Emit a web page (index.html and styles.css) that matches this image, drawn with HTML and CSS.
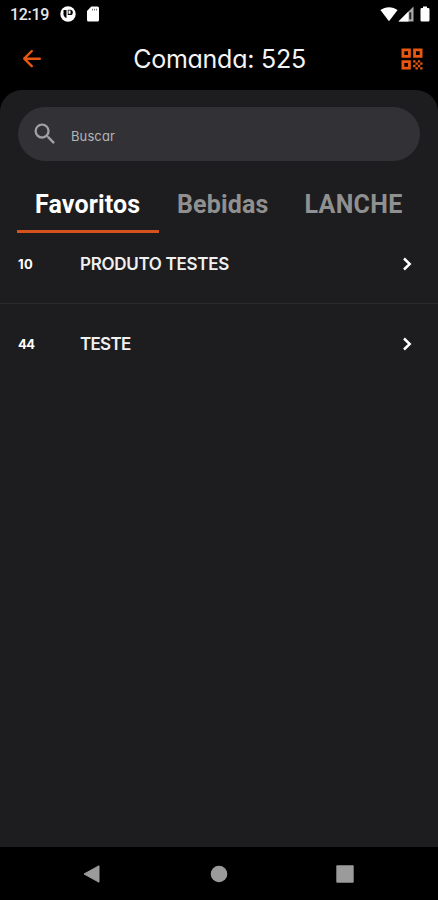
FILE: index.html
```html
<!DOCTYPE html>
<html lang="pt-BR">
<head>
<meta charset="utf-8">
<meta name="viewport" content="width=device-width, initial-scale=1">
<title>Comanda: 525</title>
<link rel="stylesheet" href="styles.css">
</head>
<body>
<div class="phone">
  <div class="status">
    <span class="clock">12:19</span>
    <svg class="app-dot" width="16" height="16" viewBox="0 0 16 16"><circle cx="8" cy="8" r="7.700" fill="#fff"/><path d="M3.500 4h3v8.200A4.800 4.800 0 0 1 3.500 9zM7.800 3.800h2.400a2.600 2.600 0 0 1 0 5.200H7.800z" fill="#000"/><path d="M8.500 4.500h2v3.300h-2z" fill="#fff"/></svg>
    <svg class="sd" width="12" height="16" viewBox="0 0 12 16"><path d="M4.300.500h6.200A1.500 1.500 0 0 1 12 2v12a1.500 1.500 0 0 1-1.500 1.500h-9A1.500 1.500 0 0 1 0 14V5z" fill="#fff"/><path d="M5 2.800h1v1.700H5zM7 2.800h1v1.700H7zM9 2.800h1v1.700H9z" fill="#777"/></svg>
    <svg class="wifi" width="18" height="16" viewBox="0 0 18 16"><path d="M9 15.200.400 4.100C5.200.200 12.800.200 17.600 4.100z" fill="#fff"/></svg>
    <svg class="signal" width="16" height="16" viewBox="0 0 16 16"><path d="M15.500.500v15H.500z" fill="#aaa"/><path d="M10.500 5.500v10H.500z" fill="#fff"/><path d="M11.300 6.300h2v7h-2z" fill="#222"/></svg>
    <svg class="battery" width="10" height="16" viewBox="0 0 10 16"><path d="M3 .500h4V2h1.200A1.300 1.300 0 0 1 9.500 3.300v10.900a1.300 1.300 0 0 1-1.300 1.300H1.800A1.300 1.300 0 0 1 .500 14.200V3.300A1.300 1.300 0 0 1 1.800 2H3z" fill="#fff"/></svg>
  </div>
  <header class="header">
    <svg width="20" height="20" viewBox="0 0 20 20" fill="none" stroke="#e8560f" stroke-width="2.400" stroke-linecap="round" stroke-linejoin="round"><path d="M17.800 9.700H2.500M9.800 2 2.200 9.700l7.600 7.500"/></svg>
    <h1 class="title">Comanda: 525</h1>
    <svg class="qr" width="28" height="28" viewBox="0 0 24 24" fill="#e8560f"><path fill-rule="evenodd" d="M3 3h8v8H3zm2.400 2.400v3.200h3.200V5.400zM13 3h8v8h-8zm2.400 2.400v3.200h3.200V5.400zM3 13h8v8H3zm2.400 2.400v3.200h3.200v-3.200z"/><path d="M13 13h2v2h-2zM15 15h2v2h-2zM17 13h2v2h-2zM19 15h2v2h-2zM13 17h2v2h-2zM15 19h2v2h-2zM17 17h2v2h-2zM19 19h2v2h-2z"/></svg>
  </header>
  <main class="panel">
    <div class="search">
      <svg width="28" height="28" viewBox="0 0 24 24" fill="#a1a1a3"><path d="M15.500 14h-.790l-.280-.270A6.471 6.471 0 0 0 16 9.500 6.500 6.500 0 1 0 9.500 16c1.610 0 3.090-.590 4.230-1.570l.270.280v.790l5 4.990L20.490 19l-4.990-5zm-6 0C7.010 14 5 11.990 5 9.500S7.010 5 9.500 5 14 7.010 14 9.500 11.990 14 9.500 14z"/></svg>
      <span class="placeholder">Buscar</span>
    </div>
    <nav class="tabs">
      <div class="tab active"><span>Favoritos</span></div>
      <div class="tab"><span>Bebidas</span></div>
      <div class="tab last"><span>LANCHE</span></div>
    </nav>
    <div class="list">
      <div class="row"><span class="code">10</span><span class="name">PRODUTO TESTES</span><svg width="12" height="16" viewBox="0 0 12 16"><path d="M3 2.500 8.700 8 3 13.500" fill="none" stroke="#fff" stroke-width="2.500"/></svg></div>
      <div class="row"><span class="code tight">44</span><span class="name short">TESTE</span><svg width="12" height="16" viewBox="0 0 12 16"><path d="M3 2.500 8.700 8 3 13.500" fill="none" stroke="#fff" stroke-width="2.500"/></svg></div>
    </div>
  </main>
  <footer class="nav">
    <svg width="18" height="20" viewBox="0 0 18 20"><path d="M1 10 16 1.800v16.400z" fill="#9b9b9b" stroke="#9b9b9b" stroke-linejoin="round"/></svg>
    <svg width="18" height="18" viewBox="0 0 18 18"><circle cx="9" cy="9" r="8.300" fill="#9b9b9b"/></svg>
    <svg width="18" height="18" viewBox="0 0 18 18"><rect x=".300" y=".300" width="17.400" height="17.400" rx="1" fill="#9b9b9b"/></svg>
  </footer>
</div>
</body>
</html>
```
FILE: styles.css
```css
* { box-sizing: border-box; }
body { margin: 0; background: #000; }
svg { display: block; flex: none; }
.phone {
  width: 438px;
  height: 900px;
  display: flex;
  flex-direction: column;
  overflow: hidden;
  background: #000;
  color: #fff;
  font-family: Inter, sans-serif;
  font-feature-settings: "cv11";
}
.status { height: 28px; display: flex; align-items: center; padding: 0 8px 0 10px; }
.clock { font: 500 16px/28px Roboto, sans-serif; letter-spacing: -0.3px; width: 39px; padding-top: 1px; white-space: nowrap; color: #e8e8e8; }
.app-dot { margin-left: 11px; }
.sd { margin-left: 11px; }
.wifi { margin-left: auto; }
.battery { margin-left: 6px; }
.header {
  height: 62px;
  display: flex;
  align-items: center;
  justify-content: space-between;
  padding: 0 12px 0 22px;
}
.title { margin: 0 1px 0 0; font-size: 25px; font-weight: 400; line-height: 60px; letter-spacing: -0.25px; color: #f4f4f4; }
.panel { flex: 1; background: #1d1d1f; border-radius: 22px 22px 0 0; padding-top: 17px; }
.search {
  height: 54px;
  margin: 0 18px;
  border-radius: 27px;
  background: #323135;
  display: flex;
  align-items: center;
  padding-left: 13px;
  gap: 12px;
}
.placeholder { font-size: 13px; letter-spacing: 0.1px; color: #b5b5b7; padding-top: 4px; }
.tabs { display: flex; height: 72px; padding-left: 17px; font: 700 25px/28px Roboto, sans-serif; color: #909090; }
.tab { padding: 30px 18px 0; white-space: nowrap; letter-spacing: 0.15px; }
.tab.active { width: 142px; color: #fff; border-bottom: 3px solid #d5521c; }
.tab.last { padding-right: 0; letter-spacing: 0.3px; }
.list { margin-top: -9px; }
.row { height: 80px; display: flex; align-items: center; padding: 0 25px 0 18px; }
.row:first-child { border-bottom: 1px solid #2b2b2d; }
.code { width: 62px; font-size: 13px; font-weight: 700; letter-spacing: 0.3px; }
.code.tight { letter-spacing: -0.6px; }
.name { flex: 1; font-size: 17px; font-weight: 600; letter-spacing: -0.3px; color: #f0f0f0; }
.name.short { letter-spacing: -0.7px; }
.nav { height: 53px; display: flex; align-items: center; justify-content: space-between; padding: 0 84px 0 83px; }
```
